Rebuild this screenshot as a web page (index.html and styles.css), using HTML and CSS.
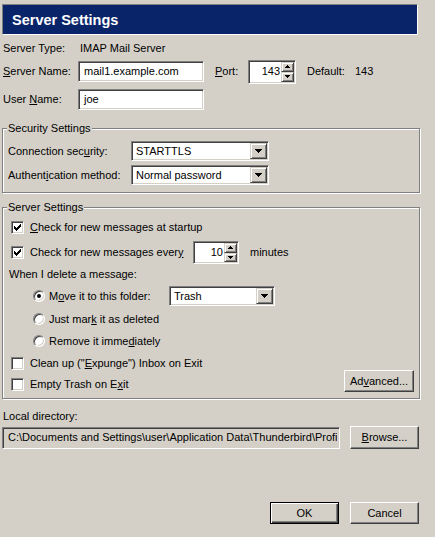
FILE: index.html
```html
<!DOCTYPE html>
<html>
<head>
<meta charset="utf-8">
<title>Server Settings</title>
<link rel="stylesheet" href="styles.css">
</head>
<body>
<div class="dialog">
  <div class="header"><span class="title">Server Settings</span></div>

  <div class="row r-type"><span class="lbl-type">Server Type:</span><span>IMAP Mail Server</span></div>

  <div class="row r-name">
    <span class="lbl-main"><u>S</u>erver Name:</span>
    <div class="field f-server"><span>mail1.example.com</span></div>
    <span class="lbl-port"><u>P</u>ort:</span>
    <div class="field spin f-port">
      <span class="spin-val">143</span>
      <div class="spin-btns">
        <div class="sbtn"><svg width="5" height="3" viewBox="0 0 5 3"><path d="M2 0H3V1H4V2H5V3H0V2H1V1H2Z"/></svg></div>
        <div class="sbtn"><svg width="5" height="3" viewBox="0 0 5 3"><path d="M0 0H5V1H4V2H3V3H2V2H1V1H0Z"/></svg></div>
      </div>
    </div>
    <span class="lbl-default">Default:</span><span>143</span>
  </div>

  <div class="row r-user">
    <span class="lbl-main">User <u>N</u>ame:</span>
    <div class="field f-server"><span>joe</span></div>
  </div>

  <fieldset class="group g-security">
    <legend>Security Settings</legend>
    <div class="row r-menu">
      <span class="lbl-sec">Connection sec<u>u</u>rity:</span>
      <div class="menulist m-sec"><span class="m-val">STARTTLS</span><div class="dd"><svg width="7" height="4" viewBox="0 0 7 4"><path d="M0 0H7V1H6V2H5V3H4V4H3V3H2V2H1V1H0Z"/></svg></div></div>
    </div>
    <div class="row r-menu r-auth">
      <span class="lbl-sec">Authent<u>i</u>cation method:</span>
      <div class="menulist m-sec"><span class="m-val">Normal password</span><div class="dd"><svg width="7" height="4" viewBox="0 0 7 4"><path d="M0 0H7V1H6V2H5V3H4V4H3V3H2V2H1V1H0Z"/></svg></div></div>
    </div>
  </fieldset>

  <fieldset class="group g-server">
    <legend>Server Settings</legend>
    <div class="row r-cb1">
      <div class="cb"><svg width="7" height="7" viewBox="0 0 7 7"><path d="M0 2h1v3H0zM1 3h1v3H1zM2 4h1v3H2zM3 3h1v3H3zM4 2h1v3H4zM5 1h1v3H5zM6 0h1v3H6z"/></svg></div>
      <span class="cb-text"><u>C</u>heck for new messages at startup</span>
    </div>
    <div class="row r-cb2">
      <div class="cb"><svg width="7" height="7" viewBox="0 0 7 7"><path d="M0 2h1v3H0zM1 3h1v3H1zM2 4h1v3H2zM3 3h1v3H3zM4 2h1v3H4zM5 1h1v3H5zM6 0h1v3H6z"/></svg></div>
      <span class="cb-text every">Check for new messages ever<u>y</u></span>
      <div class="field spin f-min">
        <span class="spin-val">10</span>
        <div class="spin-btns">
          <div class="sbtn"><svg width="5" height="3" viewBox="0 0 5 3"><path d="M2 0H3V1H4V2H5V3H0V2H1V1H2Z"/></svg></div>
          <div class="sbtn"><svg width="5" height="3" viewBox="0 0 5 3"><path d="M0 0H5V1H4V2H3V3H2V2H1V1H0Z"/></svg></div>
        </div>
      </div>
      <span class="minutes">minutes</span>
    </div>
    <div class="row r-when">When I delete a message:</div>
    <div class="row r-radio r-move">
      <div class="radio on"></div>
      <span class="radio-text move">M<u>o</u>ve it to this folder:</span>
      <div class="menulist m-trash"><span class="m-val">Trash</span><div class="dd"><svg width="7" height="4" viewBox="0 0 7 4"><path d="M0 0H7V1H6V2H5V3H4V4H3V3H2V2H1V1H0Z"/></svg></div></div>
    </div>
    <div class="row r-radio r-mark">
      <div class="radio"></div>
      <span class="radio-text">Just mar<u>k</u> it as deleted</span>
    </div>
    <div class="row r-radio r-remove">
      <div class="radio"></div>
      <span class="radio-text">Remove it imme<u>d</u>iately</span>
    </div>
    <div class="row r-cb3">
      <div class="cb"></div>
      <span class="cb-text">Clean up ("<u>E</u>xpunge") Inbox on Exit</span>
    </div>
    <div class="row r-cb4">
      <div class="cb-item">
        <div class="cb"></div>
        <span class="cb-text">Empty Trash on E<u>x</u>it</span>
      </div>
      <div class="btn btn-adv">Ad<u>v</u>anced...</div>
    </div>
  </fieldset>

  <div class="row r-local">Local directory:</div>
  <div class="row r-dir">
    <div class="field f-dir"><span class="dir-text">C:\Documents and Settings\user\Application Data\Thunderbird\Profiles</span></div>
    <div class="btn btn-browse"><u>B</u>rowse...</div>
  </div>

  <div class="row footer">
    <div class="btn default">OK</div>
    <div class="btn">Cancel</div>
  </div>
</div>
</body>
</html>
```

FILE: styles.css
```css
* { box-sizing: border-box; }
html, body { margin: 0; padding: 0; }
body {
  background: #d4d0c8;
  color: #000;
  font-family: "Liberation Sans", Arial, sans-serif;
  font-size: 11px;
  line-height: 13px;
  width: 435px;
  height: 537px;
  overflow: hidden;
}
u { text-decoration: underline; text-underline-offset: 1px; }

.dialog { padding-top: 4px; }

.header {
  margin-left: 2px;
  width: 416px;
  height: 31px;
  background: #0a246a;
  border: 1px solid;
  border-color: #808080 #fff #fff #808080;
  display: flex;
  align-items: center;
  padding: 2px 0 0 9px;
}
.title {
  color: #fff;
  font-weight: bold;
  font-size: 14.5px;
  line-height: 17px;
}

.row { display: flex; align-items: center; white-space: nowrap; }

.r-type { height: 16px; margin: 5px 0 0 3px; }
.lbl-type { width: 77px; }

.r-name { height: 25px; margin: 3px 0 0 3px; }
.r-user { height: 21px; margin: 5px 0 0 3px; }
.lbl-main { width: 75px; }

/* sunken text field */
.field {
  height: 21px;
  background: #fff;
  border: 1px solid;
  border-color: #808080 #fff #fff #808080;
  box-shadow: inset 1px 1px 0 #404040, inset -1px -1px 0 #d4d0c8;
  display: flex;
  align-items: center;
  padding: 0 5px;
  overflow: hidden;
  white-space: nowrap;
  flex: none;
}
.f-server { width: 126px; }

.lbl-port { margin-left: 11px; width: 33px; }
.spin {
  height: 24px;
  padding: 1px;
  justify-content: flex-end;
}
.f-port { width: 48px; }
.spin-val { margin-right: 1px; }
.spin-btns {
  display: flex;
  flex-direction: column;
  width: 13px;
  height: 20px;
  flex: none;
}
.sbtn {
  flex: 1;
  background: #d4d0c8;
  border: 1px solid;
  border-color: #d4d0c8 #404040 #404040 #d4d0c8;
  box-shadow: inset 1px 1px 0 #fff, inset -1px -1px 0 #808080;
  display: flex;
  align-items: center;
  justify-content: center;
}
.sbtn svg, .dd svg { display: block; }
.lbl-default { margin-left: 11px; width: 48px; }

/* group boxes */
.group {
  margin: 0 0 0 2px;
  padding: 0;
  width: 418px;
  min-inline-size: 0;
  border: 1px solid #808080;
  box-shadow: 1px 1px 0 #fff, inset 1px 1px 0 #fff;
}
.group legend {
  margin-left: 4px;
  padding: 0 1px;
  line-height: 13px;
  background: #d4d0c8;
}
.g-security { margin-top: 12px; padding-bottom: 7px; }
.r-menu { height: 20px; margin: 6px 0 0 5px; }
.r-auth { margin-top: 4px; }
.lbl-sec { width: 123px; }

.menulist {
  height: 20px;
  background: #fff;
  border: 1px solid;
  border-color: #808080 #fff #fff #808080;
  box-shadow: inset 1px 1px 0 #404040, inset -1px -1px 0 #d4d0c8;
  padding: 1px;
  display: flex;
  align-items: center;
  flex: none;
}
.m-val { flex: 1; padding-left: 3px; overflow: hidden; }
.dd {
  width: 17px;
  height: 16px;
  flex: none;
  background: #d4d0c8;
  border: 1px solid;
  border-color: #d4d0c8 #404040 #404040 #d4d0c8;
  box-shadow: inset 1px 1px 0 #fff, inset -1px -1px 0 #808080;
  display: flex;
  align-items: center;
  justify-content: center;
}
.m-sec { width: 138px; }

.g-server { margin-top: 8px; padding-bottom: 6px; }

.cb {
  width: 13px;
  height: 13px;
  flex: none;
  background: #fff;
  border: 1px solid;
  border-color: #808080 #fff #fff #808080;
  box-shadow: inset 1px 1px 0 #404040, inset -1px -1px 0 #d4d0c8;
}
.cb svg { display: block; margin: 2px 0 0 2px; }
.cb-text { margin-left: 6px; }

.r-cb1 { height: 20px; margin: 3px 0 0 8px; }
.r-cb2 { height: 23px; margin: 4px 0 0 8px; }
.every { width: 163px; }
.f-min { width: 46px; height: 23px; }
.f-min .spin-btns { height: 19px; }
.minutes { margin-left: 11px; }

.r-when { height: 16px; margin: 2px 0 0 6px; }

.radio {
  width: 12px;
  height: 12px;
  flex: none;
  border-radius: 50%;
  background: #fff;
  border: 1px solid;
  border-color: #808080 #fff #fff #808080;
  box-shadow: inset 1px 1px 0 #404040, inset -1px -1px 0 #d4d0c8;
  display: flex;
  align-items: center;
  justify-content: center;
}
.radio.on::after {
  content: "";
  width: 4px;
  height: 4px;
  border-radius: 50%;
  background: #000;
}
.radio-text { margin-left: 4px; }
.r-radio { margin-left: 30px; height: 16px; }
.r-move { height: 20px; margin-top: 4px; }
.move { width: 120px; }
.m-trash { width: 106px; }
.r-mark { margin-top: 5px; }
.r-remove { margin-top: 6px; }
.r-cb3 { height: 16px; margin: 6px 0 0 8px; }
.r-cb4 { height: 22px; margin: -1px 0 0 8px; align-items: flex-end; }
.cb-item { display: flex; align-items: center; height: 16px; }

.btn {
  width: 69px;
  height: 22px;
  flex: none;
  background: #d4d0c8;
  border: 1px solid;
  border-color: #fff #404040 #404040 #fff;
  box-shadow: inset -1px -1px 0 #808080;
  display: flex;
  align-items: center;
  justify-content: center;
}
.btn.default {
  border-color: #000;
  box-shadow: inset 1px 1px 0 #fff, inset -1px -1px 0 #404040, inset -2px -2px 0 #808080;
}
.btn-adv { width: 70px; margin-left: auto; margin-right: 5px; }

.r-local { height: 16px; margin: 9px 0 0 3px; }
.r-dir { margin: 2px 0 0 2px; }
.f-dir {
  width: 338px;
  height: 22px;
  background: #d4d0c8;
  padding: 0 2px 0 5px;
}
.dir-text {
  display: block;
  width: 100%;
  overflow: hidden;
}
.btn-browse { margin-left: 10px; height: 23px; }

.footer {
  margin-top: 53px;
  justify-content: flex-end;
  gap: 11px;
  padding-right: 16px;
}
```
